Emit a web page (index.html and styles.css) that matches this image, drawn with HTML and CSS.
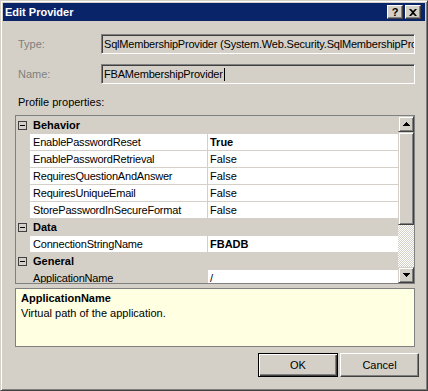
FILE: index.html
```html
<!DOCTYPE html>
<html>
<head>
<meta charset="utf-8">
<title>Edit Provider</title>
<link rel="stylesheet" href="styles.css">
</head>
<body>
<div class="window">
  <div class="titlebar">
    <span class="title">Edit Provider</span>
    <div class="tbtns">
      <div class="tbtn help">?</div>
      <div class="tbtn close"><svg width="8" height="7" viewBox="0 0 8 7"><path d="M0 0h2l2 2 2-2h2L5 3.5 8 7H6L4 5 2 7H0l3-3.5z" fill="#000"/></svg></div>
    </div>
  </div>
  <div class="client">
    <div class="field"><span class="lbl">Type:</span><div class="textbox">SqlMembershipProvider (System.Web.Security.SqlMembershipProvider, System.Web, Version=2.0.0.0, Culture=neutral)</div></div>
    <div class="field name"><span class="lbl">Name:</span><div class="textbox">FBAMembershipProvider<span class="caret"></span></div></div>
    <div class="section-label">Profile properties:</div>
    <div class="grid">
      <div class="rows">
        <div class="cat"><span class="margin"><span class="expander"></span></span><span class="catname">Behavior</span></div>
        <div class="prop"><span class="margin"></span><span class="pname">EnablePasswordReset</span><span class="pval bold">True</span></div>
        <div class="prop"><span class="margin"></span><span class="pname">EnablePasswordRetrieval</span><span class="pval">False</span></div>
        <div class="prop"><span class="margin"></span><span class="pname">RequiresQuestionAndAnswer</span><span class="pval">False</span></div>
        <div class="prop"><span class="margin"></span><span class="pname">RequiresUniqueEmail</span><span class="pval">False</span></div>
        <div class="prop"><span class="margin"></span><span class="pname">StorePasswordInSecureFormat</span><span class="pval">False</span></div>
        <div class="cat"><span class="margin"><span class="expander"></span></span><span class="catname">Data</span></div>
        <div class="prop"><span class="margin"></span><span class="pname">ConnectionStringName</span><span class="pval bold">FBADB</span></div>
        <div class="cat"><span class="margin"><span class="expander"></span></span><span class="catname">General</span></div>
        <div class="prop sel"><span class="margin"></span><span class="pname">ApplicationName</span><span class="pval">/</span></div>
      </div>
      <div class="vscroll">
        <div class="sbtn"><svg width="7" height="4" viewBox="0 0 7 4"><path d="M3 0h1v1h1v1h1v1h1v1H0V3h1V2h1V1h1z" fill="#000"/></svg></div>
        <div class="thumb"></div>
        <div class="track"></div>
        <div class="sbtn"><svg width="7" height="4" viewBox="0 0 7 4"><path d="M0 0h7v1H6v1H5v1H4v1H3V3H2V2H1V1H0z" fill="#000"/></svg></div>
      </div>
    </div>
    <div class="desc">
      <div class="desc-title">ApplicationName</div>
      <div>Virtual path of the application.</div>
    </div>
    <div class="buttons">
      <button class="btn default">OK</button>
      <button class="btn cancel">Cancel</button>
    </div>
  </div>
</div>
</body>
</html>
```

FILE: styles.css
```css
* { box-sizing: border-box; }
html, body { margin: 0; padding: 0; background: #D4D0C8; }
body {
  font-family: "Liberation Sans", Arial, sans-serif;
  font-size: 11px;
  color: #000;
}
.window {
  width: 428px;
  height: 391px;
  border: 1px solid;
  border-color: #D4D0C8 #404040 #404040 #D4D0C8;
  box-shadow: inset 1px 1px #fff, inset -1px -1px #808080;
  padding: 2px;
  background: #D4D0C8;
  display: flex;
  flex-direction: column;
}
.titlebar {
  height: 18px;
  flex-shrink: 0;
  background: #0A246A;
  display: flex;
  align-items: center;
  justify-content: space-between;
  padding: 0 4px 0 2px;
}
.title {
  color: #fff;
  font-weight: bold;
  line-height: 18px;
}
.tbtns { display: flex; gap: 2px; }
.tbtn {
  width: 16px;
  height: 14px;
  background: #D4D0C8;
  border: 1px solid;
  border-color: #fff #404040 #404040 #fff;
  box-shadow: inset -1px -1px #808080;
  display: flex;
  align-items: center;
  justify-content: center;
  font-weight: bold;
  font-size: 11px;
  line-height: 12px;
}
.tbtn.close svg { display: block; }
.client {
  flex: 1;
  display: flex;
  flex-direction: column;
  padding: 13px 6px 0 12px;
}
.field {
  display: flex;
  align-items: center;
  height: 20px;
  padding-left: 3px;
  margin-right: 4px;
}
.field.name { margin-top: 10px; }
.lbl { width: 83px; flex-shrink: 0; color: #808080; }
.textbox {
  flex: 1;
  min-width: 0;
  height: 20px;
  border: 1px solid;
  border-color: #808080 #fff #fff #808080;
  box-shadow: inset 1px 1px #404040, inset -1px -1px #D4D0C8;
  background: #D4D0C8;
  padding: 1px 2px;
  line-height: 16px;
  letter-spacing: -0.2px;
  white-space: nowrap;
  overflow: hidden;
  display: flex;
  align-items: center;
}
.caret {
  display: inline-block;
  width: 1px;
  height: 13px;
  background: #000;
  margin-left: 1px;
}
.section-label {
  margin-top: 10px;
  line-height: 16px;
  padding-left: 3px;
}
.grid {
  margin-top: 5px;
  margin-right: 4px;
  height: 169px;
  flex-shrink: 0;
  border: 1px solid #808080;
  background: #D4D0C8;
  display: flex;
  overflow: hidden;
}
.rows {
  flex: 1;
  min-width: 0;
  display: flex;
  flex-direction: column;
  gap: 1px;
  padding-top: 1px;
  overflow: hidden;
}
.cat, .prop {
  display: flex;
  height: 16px;
  flex-shrink: 0;
  line-height: 16px;
  white-space: nowrap;
}
.margin {
  width: 14px;
  flex-shrink: 0;
  display: flex;
  align-items: center;
  padding-left: 2px;
}
.expander {
  width: 9px;
  height: 9px;
  border: 1px solid #404040;
  display: flex;
  align-items: center;
  justify-content: center;
}
.expander::after {
  content: "";
  width: 5px;
  height: 1px;
  background: #000;
}
.catname { font-weight: bold; padding-left: 3px; }
.pname {
  width: 177px;
  flex-shrink: 0;
  background: #fff;
  padding-left: 3px;
  margin-right: 1px;
  letter-spacing: -0.2px;
  overflow: hidden;
}
.pval {
  flex: 1;
  background: #fff;
  padding-left: 2px;
}
.bold { font-weight: bold; }
.prop.sel .pname { background: #D4D0C8; }
.vscroll {
  width: 16px;
  flex-shrink: 0;
  display: flex;
  flex-direction: column;
}
.sbtn, .thumb {
  background: #D4D0C8;
  border: 1px solid;
  border-color: #D4D0C8 #404040 #404040 #D4D0C8;
  box-shadow: inset 1px 1px #fff, inset -1px -1px #808080;
}
.sbtn {
  height: 16px;
  flex-shrink: 0;
  display: flex;
  align-items: center;
  justify-content: center;
}
.sbtn svg { display: block; }
.thumb { height: 93px; flex-shrink: 0; }
.track {
  flex: 1;
  background-image: conic-gradient(#fff 25%, #D4D0C8 0 50%, #fff 0 75%, #D4D0C8 0);
  background-size: 2px 2px;
}
.desc {
  margin-top: 4px;
  margin-right: 4px;
  height: 59px;
  flex-shrink: 0;
  border: 1px solid #808080;
  background: #FFFFE1;
  padding: 2px 5px;
  line-height: 15px;
}
.desc-title { font-weight: bold; }
.buttons {
  margin-top: 6px;
  display: flex;
  justify-content: flex-end;
  gap: 2px;
}
.btn {
  height: 24px;
  font: inherit;
  color: #000;
  background: #D4D0C8;
  padding: 0;
  border: 1px solid;
  text-align: center;
}
.btn.default {
  width: 80px;
  border-color: #000;
  box-shadow: inset 1px 1px #fff, inset -1px -1px #404040, inset -2px -2px #808080;
}
.btn.cancel {
  width: 79px;
  border-color: #fff #404040 #404040 #fff;
  box-shadow: inset -1px -1px #808080;
}
```
